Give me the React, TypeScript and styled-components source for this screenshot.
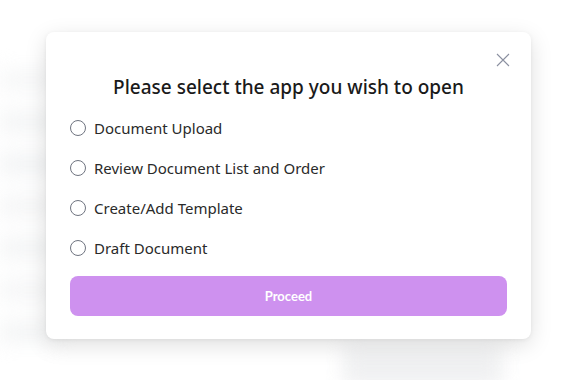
import React, { useState } from 'react';
import styled, { createGlobalStyle } from 'styled-components';

const GlobalStyle = createGlobalStyle`
  html, body {
    margin: 0;
    padding: 0;
    background: #ffffff;
  }
  body {
    font-family: "Noto Sans", "Open Sans", sans-serif;
  }
`;

const Screen = styled.div`
  position: relative;
  width: 573px;
  height: 380px;
  overflow: hidden;
  background: #ffffff;
`;

// blurred page behind the dialog
const Backdrop = styled.div`
  display: flex;
  width: 100%;
  height: 100%;
  filter: blur(10px);
  opacity: 0.7;
`;

const SideColumn = styled.div`
  width: 60px;
  padding-top: 70px;
  display: flex;
  flex-direction: column;
  gap: 22px;
`;

const SideRow = styled.div<{ $shade: string }>`
  height: 20px;
  background: ${(p) => p.$shade};
`;

const MainArea = styled.div`
  flex: 1;
  display: flex;
  align-items: flex-end;
  justify-content: flex-end;
  padding: 0 70px 0 0;
`;

const FooterBlob = styled.div`
  width: 160px;
  height: 40px;
  background: #e9eaec;
  margin-bottom: -6px;
`;

const Overlay = styled.div`
  position: absolute;
  inset: 0;
  padding: 32px 0 0 46px;
`;

const Dialog = styled.div`
  position: relative;
  width: 485px;
  box-sizing: border-box;
  background: #ffffff;
  border-radius: 8px;
  box-shadow: 0 6px 22px rgba(0, 0, 0, 0.13), 0 1px 4px rgba(0, 0, 0, 0.06);
  padding: 42px 24px 23px;
`;

const CloseButton = styled.button`
  position: absolute;
  top: 21px;
  right: 21px;
  width: 14px;
  height: 14px;
  padding: 0;
  border: none;
  background: none;
  cursor: pointer;
  display: flex;
  align-items: center;
  justify-content: center;
`;

const Title = styled.h2`
  margin: 0 0 17px;
  text-align: center;
  font-family: "Noto Sans", sans-serif;
  font-size: 19px;
  font-weight: 500;
  color: #1a1a1a;
  line-height: 26px;
`;

const OptionList = styled.div`
  display: flex;
  flex-direction: column;
  gap: 18px;
`;

const Option = styled.label`
  display: flex;
  align-items: center;
  gap: 8px;
  height: 22px;
  font-family: "Noto Sans", sans-serif;
  font-size: 15px;
  color: #2a2a2a;
  cursor: pointer;
`;

const Radio = styled.span<{ $checked: boolean }>`
  width: 14px;
  height: 14px;
  border-radius: 50%;
  border: 1px solid #6f7480;
  display: flex;
  align-items: center;
  justify-content: center;
  flex-shrink: 0;

  &::after {
    content: '';
    width: 8px;
    height: 8px;
    border-radius: 50%;
    background: ${(p) => (p.$checked ? '#9b4fd1' : 'transparent')};
  }
`;

const HiddenInput = styled.input`
  display: none;
`;

const ProceedButton = styled.button`
  margin-top: 17px;
  width: 100%;
  height: 40px;
  border: none;
  border-radius: 8px;
  background: #ce91ef;
  color: #ffffff;
  font-family: Lato, "Noto Sans", sans-serif;
  font-weight: 700;
  font-size: 13px;
  cursor: pointer;

  &:disabled {
    cursor: not-allowed;
  }
`;

const apps = [
  'Document Upload',
  'Review Document List and Order',
  'Create/Add Template',
  'Draft Document',
];

const sideShades = ['#f2f3f4', '#eef0f1', '#eceef0', '#f0f1f2', '#eef0f1', '#f1f2f3', '#eef0f1'];

export default function App() {
  const [selected, setSelected] = useState<string | null>(null);

  return (
    <Screen>
      <GlobalStyle />
      <Backdrop>
        <SideColumn>
          {sideShades.map((s, i) => (
            <SideRow key={i} $shade={s} />
          ))}
        </SideColumn>
        <MainArea>
          <FooterBlob />
        </MainArea>
      </Backdrop>

      <Overlay>
        <Dialog>
          <CloseButton aria-label="Close">
            <svg width="14" height="14" viewBox="0 0 14 14">
              <path d="M1 1L13 13M13 1L1 13" stroke="#8b90a0" strokeWidth="1.1" />
            </svg>
          </CloseButton>
          <Title>Please select the app you wish to open</Title>
          <OptionList>
            {apps.map((app) => (
              <Option key={app}>
                <HiddenInput
                  type="radio"
                  name="app"
                  checked={selected === app}
                  onChange={() => setSelected(app)}
                />
                <Radio $checked={selected === app} />
                {app}
              </Option>
            ))}
          </OptionList>
          <ProceedButton disabled={!selected}>Proceed</ProceedButton>
        </Dialog>
      </Overlay>
    </Screen>
  );
}
